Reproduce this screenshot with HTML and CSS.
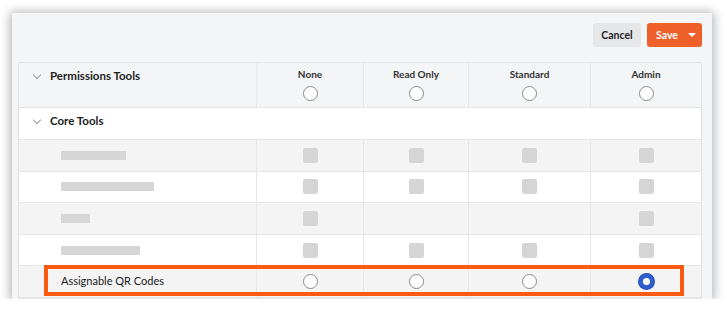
FILE: index.html
```html
<!DOCTYPE html>
<html>
<head>
<meta charset="utf-8">
<link rel="stylesheet" href="styles.css">
</head>
<body>
<div class="panel">
  <div class="toolbar">
    <button class="btn btn-cancel">Cancel</button>
    <button class="btn btn-save">Save <span class="caret"></span></button>
  </div>
  <div class="table">
    <div class="row head">
      <div class="cell name"><span class="chev"></span>Permissions Tools</div>
      <div class="cell col"><span class="lbl">None</span><span class="radio"></span></div>
      <div class="cell col"><span class="lbl">Read Only</span><span class="radio"></span></div>
      <div class="cell col"><span class="lbl">Standard</span><span class="radio"></span></div>
      <div class="cell col"><span class="lbl">Admin</span><span class="radio"></span></div>
    </div>
    <div class="row group">
      <div class="cell name"><span class="chev"></span>Core Tools</div>
    </div>
    <div class="row data alt">
      <div class="cell item"><span class="ph" style="width:65px"></span></div>
      <div class="cell box"><span class="sq"></span></div>
      <div class="cell box"><span class="sq"></span></div>
      <div class="cell box"><span class="sq"></span></div>
      <div class="cell box"><span class="sq"></span></div>
    </div>
    <div class="row data">
      <div class="cell item"><span class="ph" style="width:93px"></span></div>
      <div class="cell box"><span class="sq"></span></div>
      <div class="cell box"><span class="sq"></span></div>
      <div class="cell box"><span class="sq"></span></div>
      <div class="cell box"><span class="sq"></span></div>
    </div>
    <div class="row data alt">
      <div class="cell item"><span class="ph" style="width:29px"></span></div>
      <div class="cell box"><span class="sq"></span></div>
      <div class="cell box"></div>
      <div class="cell box"></div>
      <div class="cell box"><span class="sq"></span></div>
    </div>
    <div class="row data">
      <div class="cell item"><span class="ph" style="width:79px"></span></div>
      <div class="cell box"><span class="sq"></span></div>
      <div class="cell box"><span class="sq"></span></div>
      <div class="cell box"><span class="sq"></span></div>
      <div class="cell box"><span class="sq"></span></div>
    </div>
    <div class="row data alt last">
      <div class="cell item"><span class="txt">Assignable QR Codes</span></div>
      <div class="cell box"><span class="radio"></span></div>
      <div class="cell box"><span class="radio"></span></div>
      <div class="cell box"><span class="radio"></span></div>
      <div class="cell box"><span class="radio on"></span></div>
      <div class="highlight"></div>
    </div>
  </div>
</div>
</body>
</html>
```
FILE: styles.css
```css
* { box-sizing: border-box; }
html, body { margin: 0; padding: 0; background: #ffffff; }
body { font-family: Lato, "Open Sans", sans-serif; color: #222; }

.panel {
  margin: 13px 0 0 12px;
  width: 700px;
  height: 286px;
  background: #f4f5f7;
  overflow: hidden;
  box-shadow: 0 1px 10px 2px rgba(0,0,0,0.3);
}

.toolbar {
  display: flex;
  justify-content: flex-end;
  gap: 6px;
  padding: 10px 10px 0 0;
  height: 49px;
}
.btn {
  height: 24px;
  border: none;
  border-radius: 3px;
  font-family: Lato, sans-serif;
  font-weight: 700;
  font-size: 10.5px;
  padding: 0;
}
.btn-cancel { width: 48px; background: #e4e6e8; color: #232323; }
.btn-save {
  width: 55px;
  background: #ef5f2a;
  color: #fff;
  display: flex;
  align-items: center;
  justify-content: flex-start;
  padding-left: 9px;
  gap: 10px;
}
.caret {
  width: 0; height: 0;
  border-left: 4px solid transparent;
  border-right: 4px solid transparent;
  border-top: 4px solid #fff;
}

.table {
  margin-left: 6px;
  width: 684px;
  border: 1px solid #e2e3e5;
  border-radius: 2px;
  background: #fff;
}
.row {
  display: grid;
  grid-template-columns: 237px 107px 105px 122px 1fr;
  border-bottom: 1px solid #e6e6e6;
  position: relative;
}
.head { height: 45px; background: #f4f5f7; }
.group { height: 32px; background: #fff; display: flex; }
.data { height: 31.6px; background: #fff; }
.data.alt { background: #f4f4f4; }

.cell { border-left: 1px solid #e6e6e6; }
.cell.name, .cell.item { border-left: none; }

.name {
  display: flex;
  align-items: flex-start;
  font-weight: 700;
  font-size: 11.5px;
  color: #222;
  padding-left: 15px;
  padding-top: 6px;
}
.group .name { padding-top: 6px; }
.chev {
  display: inline-block;
  width: 6px; height: 6px;
  border-right: 1px solid #9a9a9a;
  border-bottom: 1px solid #9a9a9a;
  transform: rotate(45deg);
  margin: 3px 10px 0 0;
}

.col {
  display: flex;
  flex-direction: column;
  align-items: center;
  padding-top: 5px;
  gap: 6px;
}
.lbl { font-weight: 700; font-size: 10px; color: #333; line-height: 12px; }

.radio {
  display: block;
  width: 15px; height: 15px;
  border-radius: 50%;
  border: 1px solid #8a8a8a;
  background: #fff;
}
.radio.on {
  border: 4px solid #2f5fcf;
  background: #fff;
  box-shadow: 0 0 0 1px #1f4fb8;
}

.item {
  display: flex;
  align-items: center;
  padding-left: 42px;
}
.ph { display: block; height: 9px; background: #d6d6d6; }
.txt { font-size: 11px; color: #222; margin-top: -3px; }

.box {
  display: flex;
  align-items: center;
  justify-content: center;
}
.sq {
  display: block;
  width: 15px; height: 15px;
  border-radius: 2px;
  background: #d5d5d5;
}

.highlight {
  position: absolute;
  left: 25px;
  top: -1px;
  width: 640px;
  height: 31px;
  border: 4px solid #fb5a12;
  pointer-events: none;
}
```
